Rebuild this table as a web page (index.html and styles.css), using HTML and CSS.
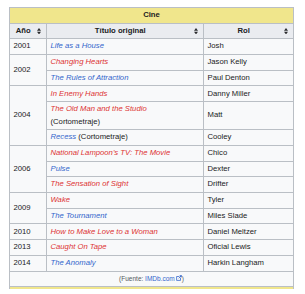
FILE: index.html
```html
<!DOCTYPE html>
<html lang="es">
<head>
<meta charset="utf-8">
<title>Cine</title>
<link rel="stylesheet" href="styles.css">
</head>
<body>
<div class="page">
<table class="films">
  <colgroup>
    <col class="c-year">
    <col class="c-title">
    <col class="c-role">
  </colgroup>
  <thead>
    <tr class="cap-row"><th colspan="3">Cine</th></tr>
    <tr class="head">
      <th>Año<svg class="sort" viewBox="0 0 5 8" aria-hidden="true"><polygon points="2.5,0 5,3.3 0,3.3"/><polygon points="0,4.7 5,4.7 2.5,8"/></svg></th>
      <th>Título original<svg class="sort" viewBox="0 0 5 8" aria-hidden="true"><polygon points="2.5,0 5,3.3 0,3.3"/><polygon points="0,4.7 5,4.7 2.5,8"/></svg></th>
      <th>Rol<svg class="sort" viewBox="0 0 5 8" aria-hidden="true"><polygon points="2.5,0 5,3.3 0,3.3"/><polygon points="0,4.7 5,4.7 2.5,8"/></svg></th>
    </tr>
  </thead>
  <tbody>
    <tr><td>2001</td><td><a class="lnk">Life as a House</a></td><td>Josh</td></tr>
    <tr><td rowspan="2">2002</td><td><a class="new">Changing Hearts</a></td><td>Jason Kelly</td></tr>
    <tr><td><a class="lnk">The Rules of Attraction</a></td><td>Paul Denton</td></tr>
    <tr><td rowspan="3">2004</td><td><a class="new">In Enemy Hands</a></td><td>Danny Miller</td></tr>
    <tr><td><a class="new">The Old Man and the Studio</a><br>(Cortometraje)</td><td>Matt</td></tr>
    <tr><td><a class="lnk">Recess</a> (Cortometraje)</td><td>Cooley</td></tr>
    <tr><td rowspan="3">2006</td><td><a class="new">National Lampoon's TV: The Movie</a></td><td>Chico</td></tr>
    <tr><td><a class="lnk">Pulse</a></td><td>Dexter</td></tr>
    <tr><td><a class="new">The Sensation of Sight</a></td><td>Drifter</td></tr>
    <tr><td rowspan="2">2009</td><td><a class="new">Wake</a></td><td>Tyler</td></tr>
    <tr><td><a class="lnk">The Tournament</a></td><td>Miles Slade</td></tr>
    <tr><td>2010</td><td><a class="new">How to Make Love to a Woman</a></td><td>Daniel Meltzer</td></tr>
    <tr><td>2013</td><td><a class="new">Caught On Tape</a></td><td>Oficial Lewis</td></tr>
    <tr><td>2014</td><td><a class="lnk">The Anomaly</a></td><td>Harkin Langham</td></tr>
    <tr class="foot"><td colspan="3">(Fuente: <a class="ext">IMDb.com<svg class="ext-icon" viewBox="0 0 10 10" aria-hidden="true"><path d="M1 2.5h4.5M1 2.5v6.5h6.5V4.5" fill="none" stroke="currentColor" stroke-width="1.3"/><path d="M5.5 0.5h4v4z" fill="currentColor"/><path d="M9 1L4.5 5.5" fill="none" stroke="currentColor" stroke-width="1.4"/></svg></a>)</td></tr>
    <tr class="strip"><td colspan="3"></td></tr>
  </tbody>
</table>
</div>
</body>
</html>
```

FILE: styles.css
```css
html, body {
  margin: 0;
  padding: 0;
  background: #ffffff;
}

body {
  font-family: "Liberation Sans", Arial, sans-serif;
  color: #202122;
}

.page {
  padding: 7px 0 0 9px;
}

.films {
  border-collapse: collapse;
  table-layout: fixed;
  width: 284px;
  font-size: 7.7px;
  line-height: 12.5px;
  background: #f8f9fa;
  color: #202122;
}

.c-year { width: 37px; }
.c-title { width: 157px; }
.c-role { width: 90px; }

.films th,
.films td {
  border: 1px solid #babfc5;
  padding: 1.1px 3.5px;
  text-align: left;
  vertical-align: middle;
}

.films th {
  font-weight: bold;
  text-align: center;
}

.cap-row th {
  background: #f0e68c;
}

.head th {
  background: #eaecf0;
  position: relative;
  padding-right: 13px;
}

.sort {
  position: absolute;
  right: 5.5px;
  top: 50%;
  width: 4px;
  height: 6.4px;
  margin-top: -3.2px;
  fill: #2a2b2c;
}

.lnk {
  color: #3366cc;
  font-style: italic;
  text-decoration: none;
}

.new {
  color: #dd3333;
  font-style: italic;
  text-decoration: none;
}

.foot td {
  text-align: center;
  font-size: 6.5px;
  color: #54595d;
}

.ext {
  color: #3366cc;
  text-decoration: none;
}

.ext-icon {
  width: 6px;
  height: 6px;
  margin-left: 1px;
  vertical-align: -0.5px;
}

.strip td {
  background: #f0e68c;
  height: 2px;
  padding: 0;
  font-size: 0;
  line-height: 0;
  border-bottom: 0;
}
```
